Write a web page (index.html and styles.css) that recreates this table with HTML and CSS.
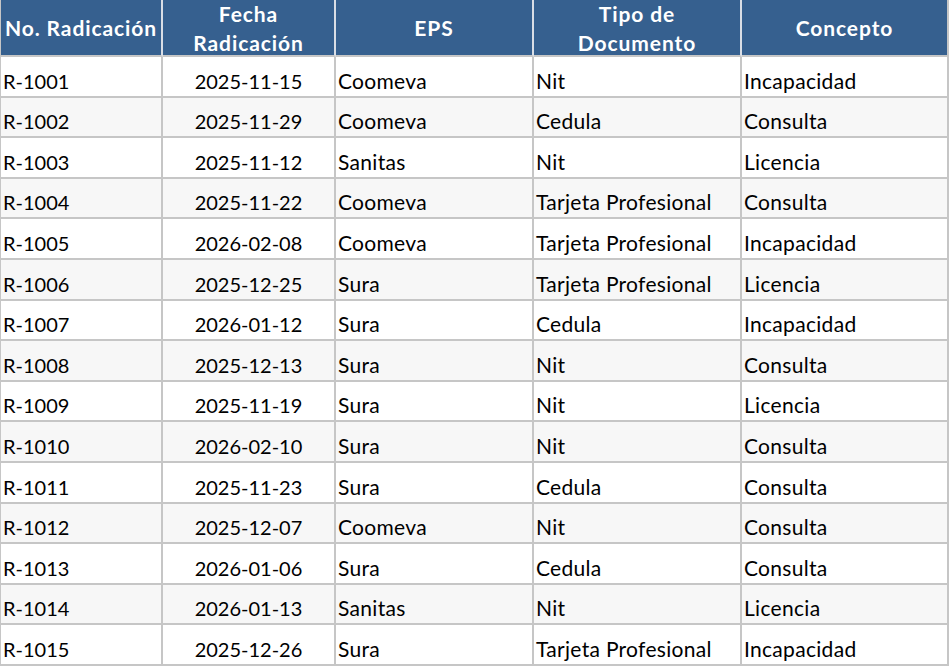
FILE: index.html
```html
<!DOCTYPE html>
<html lang="es">
<head>
<meta charset="utf-8">
<link rel="stylesheet" href="styles.css">
</head>
<body>
<table class="grid">
<colgroup>
<col class="c1"><col class="c2"><col class="c3"><col class="c4"><col class="c5">
</colgroup>
<thead>
<tr><th><div class="hd">No. Radicación</div></th><th><div class="hd">Fecha<br>Radicación</div></th><th><div class="hd">EPS</div></th><th><div class="hd">Tipo de<br>Documento</div></th><th><div class="hd">Concepto</div></th></tr>
</thead>
<tbody>
<tr><td>R-1001</td><td class="date">2025-11-15</td><td class="txt">Coomeva</td><td class="txt">Nit</td><td class="txt">Incapacidad</td></tr>
<tr><td>R-1002</td><td class="date">2025-11-29</td><td class="txt">Coomeva</td><td class="txt">Cedula</td><td class="txt">Consulta</td></tr>
<tr><td>R-1003</td><td class="date">2025-11-12</td><td class="txt">Sanitas</td><td class="txt">Nit</td><td class="txt">Licencia</td></tr>
<tr><td>R-1004</td><td class="date">2025-11-22</td><td class="txt">Coomeva</td><td class="txt">Tarjeta Profesional</td><td class="txt">Consulta</td></tr>
<tr><td>R-1005</td><td class="date">2026-02-08</td><td class="txt">Coomeva</td><td class="txt">Tarjeta Profesional</td><td class="txt">Incapacidad</td></tr>
<tr><td>R-1006</td><td class="date">2025-12-25</td><td class="txt">Sura</td><td class="txt">Tarjeta Profesional</td><td class="txt">Licencia</td></tr>
<tr><td>R-1007</td><td class="date">2026-01-12</td><td class="txt">Sura</td><td class="txt">Cedula</td><td class="txt">Incapacidad</td></tr>
<tr><td>R-1008</td><td class="date">2025-12-13</td><td class="txt">Sura</td><td class="txt">Nit</td><td class="txt">Consulta</td></tr>
<tr><td>R-1009</td><td class="date">2025-11-19</td><td class="txt">Sura</td><td class="txt">Nit</td><td class="txt">Licencia</td></tr>
<tr><td>R-1010</td><td class="date">2026-02-10</td><td class="txt">Sura</td><td class="txt">Nit</td><td class="txt">Consulta</td></tr>
<tr><td>R-1011</td><td class="date">2025-11-23</td><td class="txt">Sura</td><td class="txt">Cedula</td><td class="txt">Consulta</td></tr>
<tr><td>R-1012</td><td class="date">2025-12-07</td><td class="txt">Coomeva</td><td class="txt">Nit</td><td class="txt">Consulta</td></tr>
<tr><td>R-1013</td><td class="date">2026-01-06</td><td class="txt">Sura</td><td class="txt">Cedula</td><td class="txt">Consulta</td></tr>
<tr><td>R-1014</td><td class="date">2026-01-13</td><td class="txt">Sanitas</td><td class="txt">Nit</td><td class="txt">Licencia</td></tr>
<tr><td>R-1015</td><td class="date">2025-12-26</td><td class="txt">Sura</td><td class="txt">Tarjeta Profesional</td><td class="txt">Incapacidad</td></tr>
</tbody>
</table>
</body>
</html>
```
FILE: styles.css
```css
html, body {
  margin: 0;
  padding: 0;
  background: #ffffff;
}
body {
  font-family: Lato, "Open Sans", sans-serif;
  font-size: 20px;
  color: #000000;
}
.grid {
  border-collapse: separate;
  border-spacing: 0;
  table-layout: fixed;
  width: 949px;
  margin: 0;
  border-left: 1px solid #c6c6c6;
}
.c1 { width: 162px; }
.c2 { width: 173px; }
.c3 { width: 198px; }
.c4 { width: 208px; }
.c5 { width: 207px; }
.grid th {
  background: #36608f;
  color: #ffffff;
  font-weight: bold;
  font-size: 21px;
  letter-spacing: 0.9px;
  text-align: center;
  vertical-align: middle;
  height: 57px;
  padding: 0;
  border-right: 2px solid #d9dee6;
  border-bottom: 2px solid #c6c6c6;
  white-space: nowrap;
  box-sizing: border-box;
}
.grid th:last-child {
  border-right: 2px solid #c6c6c6;
}
.hd {
  height: 55px;
  line-height: 29px;
  display: flex;
  flex-direction: column;
  justify-content: center;
  align-items: center;
}
.grid td {
  height: 40.6px;
  line-height: 24px;
  padding: 0 0 3px 2px;
  vertical-align: bottom;
  text-align: left;
  border-right: 2px solid #c6c6c6;
  border-bottom: 2px solid #c6c6c6;
  white-space: nowrap;
  overflow: hidden;
  box-sizing: border-box;
}
.grid td.txt {
  font-size: 21px;
  letter-spacing: 0.3px;
}
.grid td.date {
  text-align: center;
  padding-left: 0;
}
.grid tbody tr:nth-child(even) td {
  background: #f7f7f7;
}
```
